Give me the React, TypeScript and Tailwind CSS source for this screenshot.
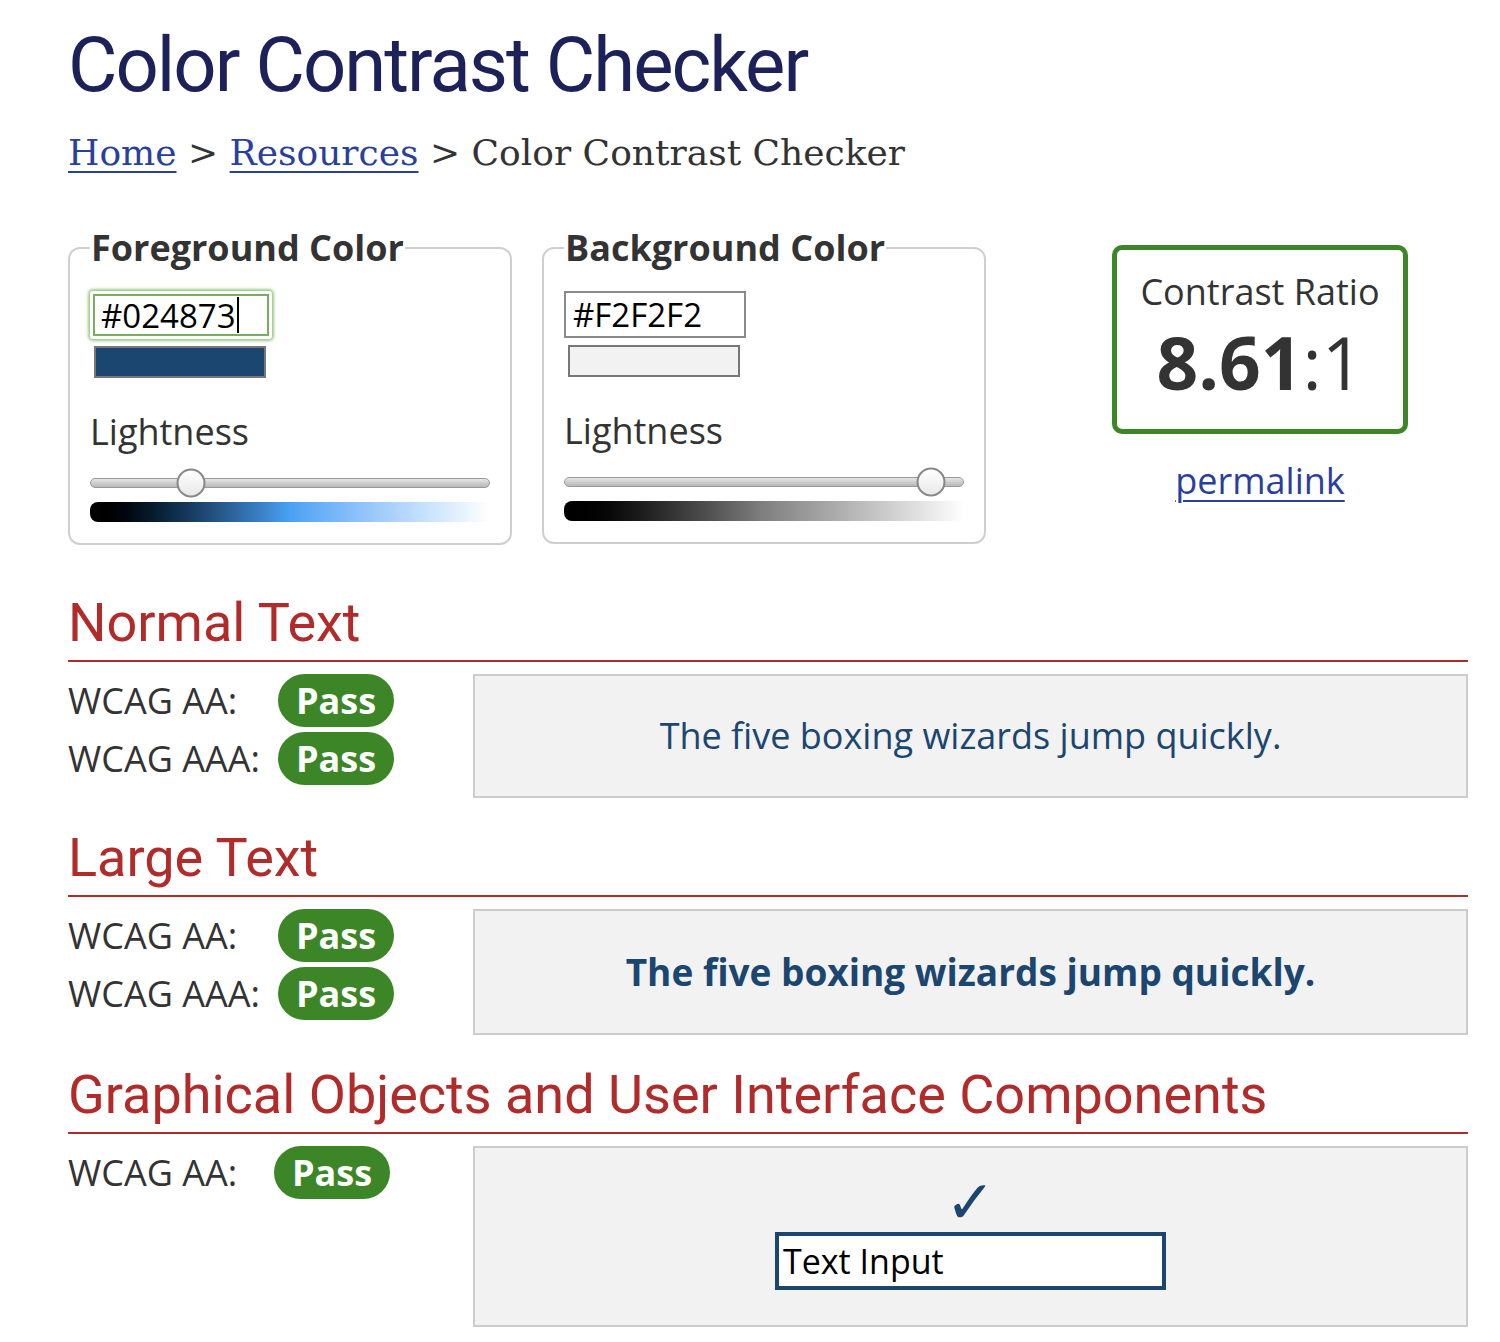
import React from 'react';

const sans = "font-['Open_Sans',sans-serif]";

function Pass() {
  return (
    <span className="inline-flex h-[53px] w-[116px] items-center justify-center rounded-full bg-[#3c8628] text-[36px] font-bold text-white">
      Pass
    </span>
  );
}

function ColorPanel({
  legend,
  value,
  focused,
  swatch,
  thumb,
  gradient,
}: {
  legend: string;
  value: string;
  focused?: boolean;
  swatch: string;
  thumb: string;
  gradient: string;
}) {
  return (
    <fieldset className="w-[444px] rounded-[12px] border-2 border-[#cfcfcf] px-[20px] pt-0 pb-[21px]">
      <legend className="px-[1px] text-[36px] font-bold leading-[40px] text-[#333]">{legend}</legend>
      <div className="mt-[23px]">
        {focused ? (
          <div className="inline-block rounded-[3px] p-[3px] shadow-[0_0_3px_2px_#9cc98a]">
            <div className="flex h-[42px] w-[176px] items-center border-2 border-[#7aac64] bg-white pl-[6px] text-[33px] leading-none text-black">
              {value}
              <span className="ml-[1px] h-[36px] w-[2px] bg-black" />
            </div>
          </div>
        ) : (
          <div className="flex h-[47px] w-[182px] items-center border-2 border-[#8a8a8a] bg-white pl-[7px] text-[33px] leading-none text-black">
            {value}
          </div>
        )}
      </div>
      <div className={`mt-[7px] ml-[4px] h-[32px] w-[172px] border-2 border-[#777] ${swatch}`} />
      <div className="mt-[30px] text-[36px] leading-[48px] text-[#333]">Lightness</div>
      <div className="relative mt-[22px] h-[10px] w-[400px] rounded-full border border-[#999] bg-gradient-to-b from-[#e6e6e6] to-[#b8b8b8]">
        <div
          className={`absolute top-1/2 h-[29px] w-[29px] -translate-x-1/2 -translate-y-1/2 rounded-full border-2 border-[#888] bg-gradient-to-b from-white to-[#e8e8e8] ${thumb}`}
        />
      </div>
      <div className={`mt-[14px] h-[20px] w-[400px] rounded-l-[8px] ${gradient}`} />
    </fieldset>
  );
}

function Section({
  title,
  rows,
  labelWidth,
  children,
  boxClass,
}: {
  title: string;
  rows: string[];
  labelWidth: string;
  children: React.ReactNode;
  boxClass: string;
}) {
  return (
    <section>
      <h2 className="border-b-2 border-[#b22b2b] pb-[2px] font-['Roboto',sans-serif] text-[54px] leading-[70px] text-[#b22b2b]">
        {title}
      </h2>
      <div className="mt-[12px] flex">
        <div className="w-[405px] shrink-0">
          {rows.map((r) => (
            <div key={r} className="mb-[5px] flex items-center">
              <span className={`${labelWidth} text-[36px] leading-[53px] text-[#333]`}>{r}</span>
              <Pass />
            </div>
          ))}
        </div>
        <div className={`flex flex-1 flex-col items-center border-2 border-[#cccccc] bg-[#f2f2f2] ${boxClass}`}>
          {children}
        </div>
      </div>
    </section>
  );
}

export default function App() {
  return (
    <div className={`min-h-[1342px] w-[1500px] bg-white pl-[68px] pr-[32px] ${sans}`}>
      <h1 className="pt-[20px] font-['Roboto',sans-serif] text-[76px] leading-[90px] tracking-[-0.026em] text-[#1c2259]">
        Color Contrast Checker
      </h1>
      <nav className="mt-[21px] font-['DejaVu_Serif',serif] text-[36px] leading-[44px] text-[#333]">
        <a href="#" className="text-[#2a3f9d] underline underline-offset-[6px] decoration-2">
          Home
        </a>{' '}
        &gt;{' '}
        <a href="#" className="text-[#2a3f9d] underline underline-offset-[6px] decoration-2">
          Resources
        </a>{' '}
        &gt; Color Contrast Checker
      </nav>

      <div className="mt-[53px] flex items-start">
        <ColorPanel
          legend="Foreground Color"
          value="#024873"
          focused
          swatch="bg-[#1b4670]"
          thumb="left-[25%]"
          gradient="bg-gradient-to-r from-black via-[#4aa0f5] to-white"
        />
        <div className="ml-[30px]">
          <ColorPanel
            legend="Background Color"
            value="#F2F2F2"
            swatch="bg-[#f2f2f2]"
            thumb="left-[92%]"
            gradient="bg-gradient-to-r from-black via-[#808080] to-white"
          />
        </div>
        <div className="ml-[126px] mt-[17px] flex flex-col items-center">
          <div className="flex h-[189px] w-[296px] flex-col items-center rounded-[10px] border-[5px] border-[#3c8628] pt-[18px] text-[#333]">
            <div className="text-[36px] leading-[48px]">Contrast Ratio</div>
            <div className="mt-[6px] text-[73px] leading-[80px]">
              <span className="font-bold">8.61</span>:1
            </div>
          </div>
          <a href="#" className="mt-[23px] text-[36px] leading-[48px] text-[#2a3f9d] underline underline-offset-[6px] decoration-2">
            permalink
          </a>
        </div>
      </div>

      <div className="mt-[43px] flex flex-col gap-[25px]">
        <Section
          title="Normal Text"
          rows={['WCAG AA:', 'WCAG AAA:']}
          labelWidth="w-[210px]"
          boxClass="h-[124px] justify-center"
        >
          <span className="text-[36px] text-[#1b4670]">The five boxing wizards jump quickly.</span>
        </Section>
        <Section
          title="Large Text"
          rows={['WCAG AA:', 'WCAG AAA:']}
          labelWidth="w-[210px]"
          boxClass="h-[126px] justify-center"
        >
          <span className="text-[37px] font-bold text-[#1b4670]">The five boxing wizards jump quickly.</span>
        </Section>
        <Section
          title="Graphical Objects and User Interface Components"
          rows={['WCAG AA:']}
          labelWidth="w-[206px]"
          boxClass="h-[181px] pt-[24px]"
        >
          <span className="font-['DejaVu_Sans',sans-serif] text-[60px] leading-[60px] text-[#1b4670]">✓</span>
          <div className="flex h-[58px] w-[391px] items-center border-4 border-[#1b4670] bg-white pl-[4px] text-[34px] text-black">
            Text Input
          </div>
        </Section>
      </div>
    </div>
  );
}
